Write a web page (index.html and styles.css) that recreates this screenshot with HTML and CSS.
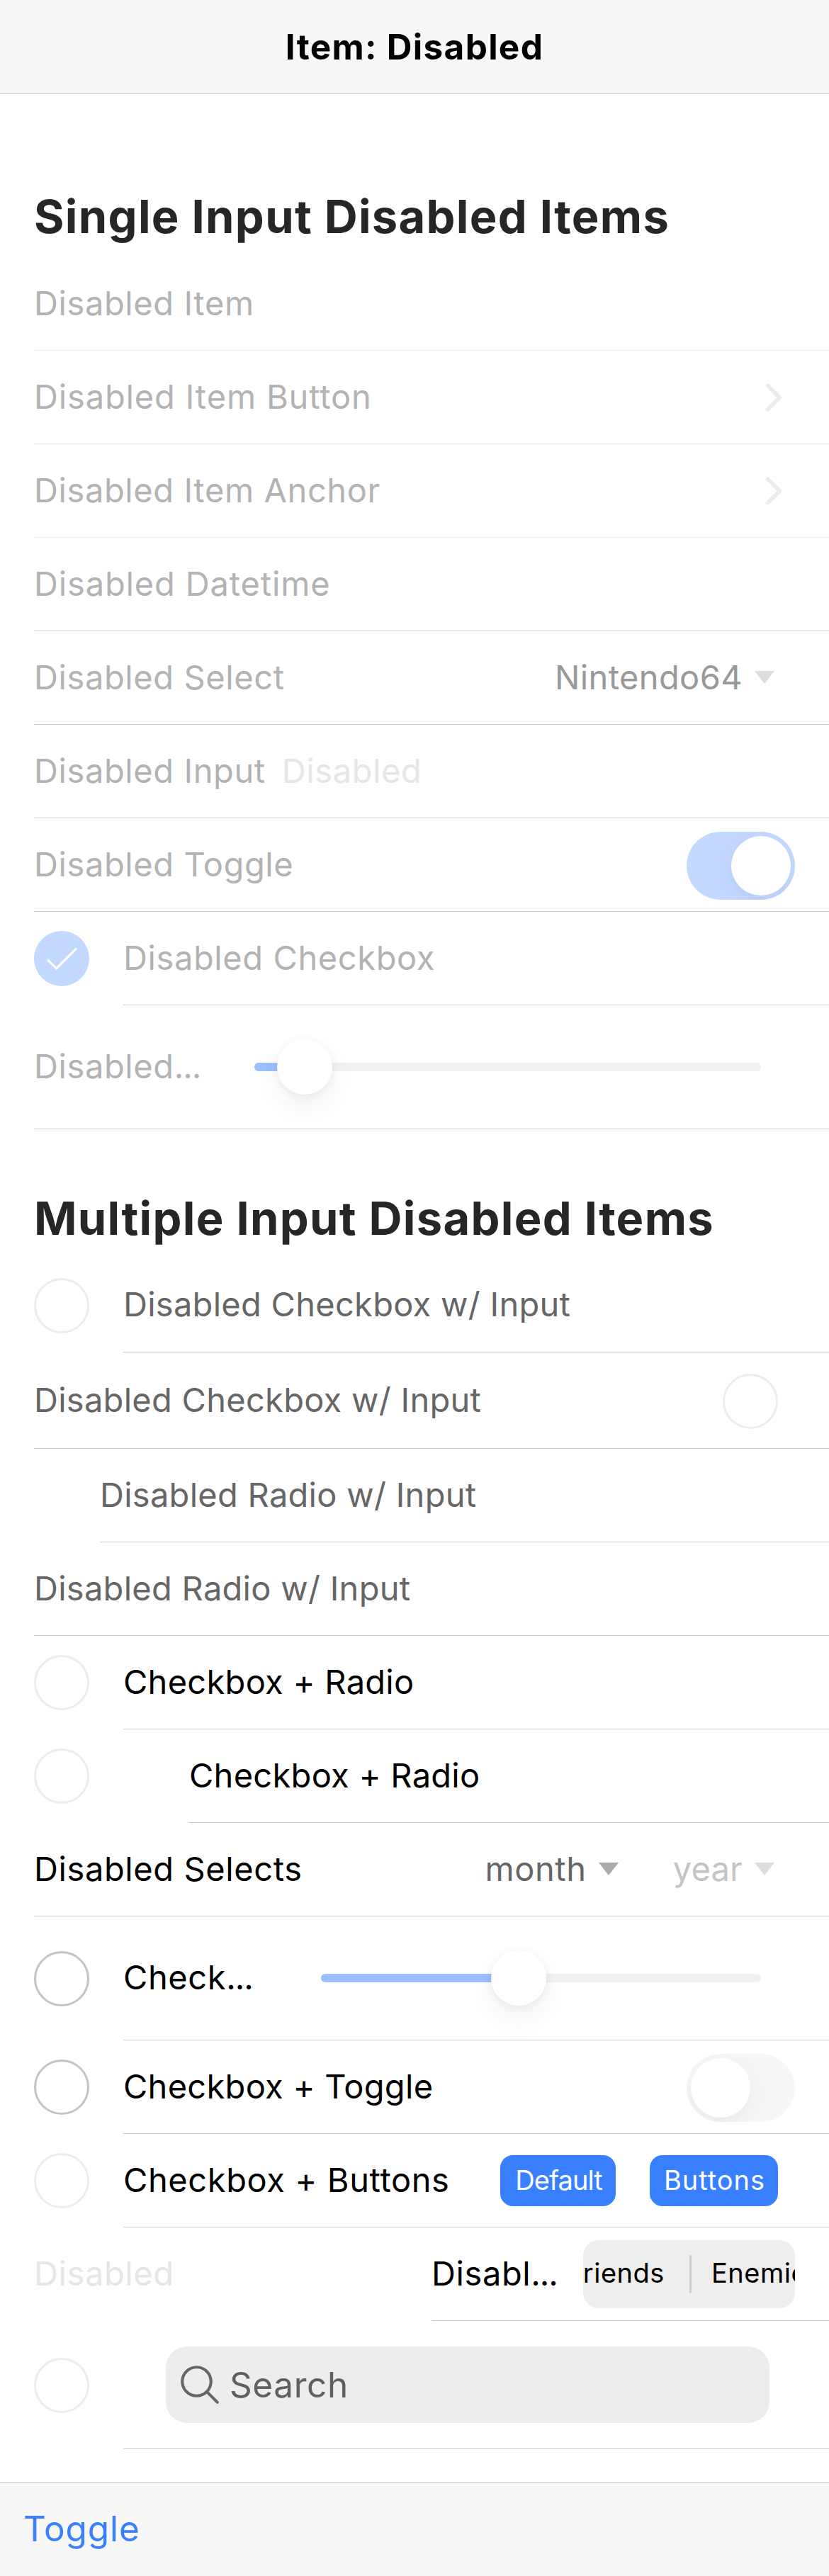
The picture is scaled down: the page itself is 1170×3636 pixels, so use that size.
FILE: index.html
```html
<!DOCTYPE html>
<html lang="en">
<head>
<meta charset="utf-8">
<title>Item: Disabled</title>
<link rel="stylesheet" href="styles.css">
</head>
<body>
<header class="header"><h1 class="title">Item: Disabled</h1></header>

<main class="content">
  <h2 class="heading heading-first">Single Input Disabled Items</h2>
  <section class="list">
    <div class="item faint-line"><div class="inner"><span class="label dim">Disabled Item</span></div></div>
    <div class="item faint-line"><div class="inner"><span class="label dim loose">Disabled Item Button</span>
      <svg class="chevron" viewBox="0 0 512 512"><path d="M184 112l144 144-144 144"/></svg></div></div>
    <div class="item faint-line"><div class="inner"><span class="label dim">Disabled Item Anchor</span>
      <svg class="chevron" viewBox="0 0 512 512"><path d="M184 112l144 144-144 144"/></svg></div></div>
    <div class="item"><div class="inner"><span class="label dim loose">Disabled Datetime</span></div></div>
    <div class="item"><div class="inner"><span class="label dim">Disabled Select</span>
      <div class="selects"><span class="select nintendo">Nintendo64<i class="caret light"></i></span></div></div></div>
    <div class="item"><div class="inner"><span class="label dim">Disabled Input</span><span class="input">Disabled</span></div></div>
    <div class="item"><div class="inner"><span class="label dim">Disabled Toggle</span>
      <span class="toggle on"><span class="handle"></span></span></div></div>
    <div class="item"><span class="checkbox checked"><svg viewBox="0 0 24 24"><path d="M5.9 12.5l3.8 3.8 8.8-8.8"/></svg></span>
      <div class="inner"><span class="label dim">Disabled Checkbox</span></div></div>
    <div class="item tall"><div class="inner"><span class="label dim range-label">Disabled<span class="dots">...</span></span>
      <div class="range"><span class="active" style="width:71px"></span><span class="knob" style="left:32px"></span></div></div></div>
  </section>

  <h2 class="heading heading-second">Multiple Input Disabled Items</h2>
  <section class="list">
    <div class="item multi low"><span class="checkbox"></span>
      <div class="inner"><span class="label mid">Disabled Checkbox w/ Input</span></div></div>
    <div class="item multi"><div class="inner"><span class="label mid">Disabled Checkbox w/ Input</span><span class="checkbox end"></span></div></div>
    <div class="item"><span class="radio"></span><div class="inner"><span class="label mid">Disabled Radio w/ Input</span></div></div>
    <div class="item"><div class="inner"><span class="label mid">Disabled Radio w/ Input</span></div></div>
    <div class="item"><span class="checkbox"></span><div class="inner"><span class="label tight">Checkbox + Radio</span></div></div>
    <div class="item"><span class="checkbox"></span><span class="radio"></span><div class="inner"><span class="label tight">Checkbox + Radio</span></div></div>
    <div class="item"><div class="inner"><span class="label">Disabled Selects</span>
      <div class="selects"><span class="select month">month<i class="caret"></i></span><span class="select year">year<i class="caret light"></i></span></div></div></div>
    <div class="item tall"><span class="checkbox enabled"></span><div class="inner"><span class="label range-label narrow">Check<span class="dots">...</span></span>
      <div class="range"><span class="active" style="width:279px"></span><span class="knob" style="left:240px"></span></div></div></div>
    <div class="item"><span class="checkbox enabled"></span><div class="inner"><span class="label tight">Checkbox + Toggle</span>
      <span class="toggle"><span class="handle"></span></span></div></div>
    <div class="item"><span class="checkbox"></span><div class="inner"><span class="label">Checkbox + Buttons</span>
      <div class="buttons"><button class="button default">Default</button><button class="button">Buttons</button></div></div></div>
    <div class="item"><span class="input start">Disabled</span><div class="inner"><span class="label">Disabl<span class="dots">...</span></span>
      <div class="segment"><span class="friends">Friends</span><span class="divider"></span><span class="enemies">Enemies</span></div></div></div>
    <div class="item search-item"><span class="checkbox"></span><div class="inner">
      <div class="searchbar"><svg class="search-icon" viewBox="0 0 512 512"><circle cx="221.1" cy="221.1" r="157.1"/><path d="M338.3 338.3L448 448"/></svg><span>Search</span></div></div></div>
  </section>
</main>

<footer class="footer"><span class="footer-button">Toggle</span></footer>
</body>
</html>
```
FILE: styles.css
```css
* { box-sizing: border-box; }

body {
  margin: 0;
  width: 1170px;
  height: 3636px;
  display: flex;
  flex-direction: column;
  background: #fff;
  color: #000;
  font-family: Inter, "Liberation Sans", sans-serif;
  font-size: 47px;
  letter-spacing: 0.6px;
  overflow: hidden;
}

.header {
  height: 132px;
  background: #f7f7f7;
  border-bottom: 1px solid #c0c0c0;
  display: flex;
  align-items: center;
  justify-content: center;
}

.title {
  margin: 0;
  font-size: 49.5px;
  font-weight: 700;
  letter-spacing: 1.3px;
  line-height: 60px;
}

.content { flex: 1; }

.heading {
  margin: 0;
  padding-left: 48px;
  font-size: 65px;
  font-weight: 700;
  line-height: 80px;
  letter-spacing: 1.3px;
  color: #262626;
}
.heading-first { padding-top: 134px; height: 231px; }
.heading-second { padding-top: 86px; height: 179px; }

/* List rows */
.item {
  display: flex;
  align-items: center;
  height: 132px;
  padding-left: 48px;
}
.inner {
  flex: 1;
  min-width: 0;
  align-self: stretch;
  display: flex;
  align-items: center;
  border-bottom: 1px solid #c8c7cc;
}
.faint-line .inner { border-color: #efeeef; }
.tall { height: 175px; }
.search-item { height: 181px; }
.multi { height: 136px; }
.multi .checkbox { margin-top: 2px; }
.low .checkbox { margin-top: 4px; }
.low .label { padding-top: 3px; }

.label { white-space: nowrap; line-height: 60px; padding-bottom: 2px; }
.dim { color: #b3b3b3; }
.mid { color: #666; letter-spacing: 0.28px; }
.loose { letter-spacing: 0.85px; }
.tight { letter-spacing: 0.28px; }
.dots { letter-spacing: -1px; }
.range-label { flex: 0 0 311px; }
.range-label.narrow { flex-basis: 279px; }

.chevron {
  width: 60px;
  height: 60px;
  margin: 0 48px 0 auto;
  fill: none;
  stroke: #ebebeb;
  stroke-width: 48;
  stroke-linecap: round;
  stroke-linejoin: round;
}

/* Selects */
.selects { display: flex; gap: 77px; margin: 0 77px 2px auto; }
.select { display: flex; align-items: center; gap: 17px; line-height: 60px; }
.nintendo { color: #999; letter-spacing: 0.4px; }
.month { color: #666; }
.year { color: #c4c4c4; letter-spacing: 0.2px; }
.caret {
  border: 14.5px solid transparent;
  border-top: 18px solid #aaa;
  border-bottom: 0;
}
.caret.light { border-top-color: #ddd; }

.input { color: #e6e6e6; padding: 0 0 2px 23px; line-height: 60px; }
.input.start { width: 561px; padding-left: 0; }

/* Checkbox and radio */
.checkbox {
  flex: none;
  width: 78px;
  height: 78px;
  margin-right: 48px;
  border: 3px solid #ededed;
  border-radius: 50%;
}
.checkbox.enabled { border-color: #c4c4c4; }
.checkbox.end { margin-left: auto; margin-right: 72px; }
.checkbox.checked { border: 0; background: #c3d9ff; }
.checkbox svg { display: block; fill: none; stroke: #fff; stroke-width: 1; }
.radio { flex: 0 0 93px; }

/* Toggle */
.toggle {
  width: 153px;
  height: 96px;
  margin: 3px 48px 0 auto;
  padding: 6px;
  display: flex;
  border-radius: 48px;
  overflow: hidden;
  background: #f7f7f7;
}
.toggle.on { justify-content: flex-end; background: #c3d9ff; }
.handle {
  width: 84px;
  height: 84px;
  border-radius: 50%;
  background: #fff;
  box-shadow: 0 9px 36px rgba(0, 0, 0, 0.05), 0 9px 6px rgba(0, 0, 0, 0.01);
}

/* Range */
.range {
  flex: 1;
  position: relative;
  height: 12px;
  margin-right: 96px;
  border-radius: 6px;
  background: #f2f2f2;
}
.active { display: block; height: 12px; border-radius: 6px 0 0 6px; background: #9cc0ff; }
.knob {
  position: absolute;
  top: -33px;
  width: 78px;
  height: 78px;
  border-radius: 50%;
  background: #fff;
  box-shadow: 0 1.5px 12px rgba(0, 0, 0, 0.06), 0 18px 39px rgba(0, 0, 0, 0.06);
}

/* Buttons */
.buttons { display: flex; gap: 48px; margin: 0 72px 0 auto; }
.button {
  width: 181px;
  height: 72px;
  padding: 0 0 1px 2px;
  border: 0;
  border-radius: 18px;
  background: #3880ff;
  color: #fff;
  font: 400 38px Inter, "Liberation Sans", sans-serif;
  letter-spacing: 1px;
}
.button.default { width: 163px; letter-spacing: -0.9px; }

/* Segment */
.segment {
  width: 299px;
  height: 96px;
  margin: 0 48px 0 auto;
  display: flex;
  align-items: center;
  overflow: hidden;
  border-radius: 22px;
  background: #eee;
  font-size: 38px;
  letter-spacing: 0.5px;
}
.friends { flex: 0 0 172px; margin-left: -22px; padding-bottom: 4px; }
.divider { flex: 0 0 3px; height: 54px; border-radius: 2px; background: #cfcfcf; }
.enemies { padding: 0 0 4px 28px; }

/* Searchbar */
.searchbar {
  width: 852px;
  height: 108px;
  margin-left: 60px;
  padding-left: 15px;
  display: flex;
  align-items: center;
  gap: 9px;
  border-radius: 30px;
  background: #ededed;
  color: #606060;
  font-size: 49.5px;
}
.search-icon {
  width: 66px;
  height: 66px;
  fill: none;
  stroke: #666;
  stroke-width: 32;
  stroke-linecap: round;
}

.footer {
  height: 132px;
  padding: 0 0 4px 33px;
  display: flex;
  align-items: center;
  border-top: 1px solid #c0c0c0;
  background: #f7f7f7;
}
.footer-button { color: #3880ff; font-size: 49.5px; letter-spacing: 0.9px; }
```
